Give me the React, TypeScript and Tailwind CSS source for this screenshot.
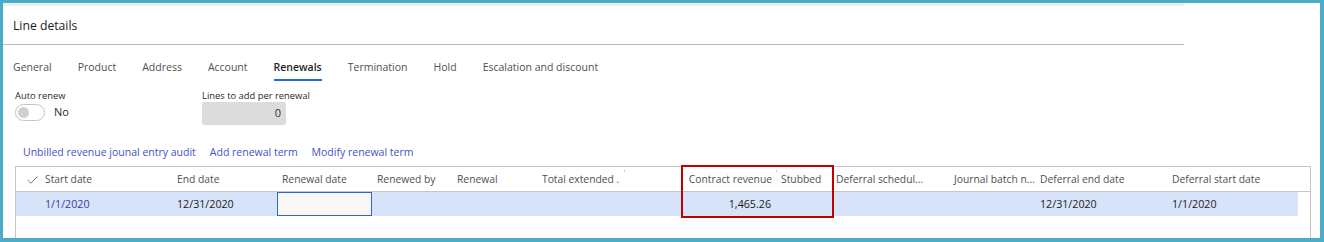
import React from "react";

const font = { fontFamily: '"Open Sans", "Noto Sans", sans-serif' };

type Col = { label: string; w: number; right?: boolean };

const cols: Col[] = [
  { label: "Start date", w: 132 },
  { label: "End date", w: 105 },
  { label: "Renewal date", w: 95 },
  { label: "Renewed by", w: 80 },
  { label: "Renewal", w: 85 },
  { label: "Total extended .", w: 87 },
  { label: "Contract revenue", w: 152, right: true },
  { label: "Stubbed", w: 55 },
  { label: "Deferral schedul...", w: 118 },
  { label: "Journal batch n...", w: 86 },
  { label: "Deferral end date", w: 132 },
  { label: "Deferral start date", w: 131 },
];

const tabs = ["General", "Product", "Address", "Account", "Renewals", "Termination", "Hold", "Escalation and discount"];

export default function App() {
  return (
    <div className="h-[242px] w-[1324px] bg-[#4bacc6] pt-[3px] pl-[3px] pr-[4px] pb-[4px]" style={font}>
      <div className="flex h-[235px] w-[1317px] flex-col overflow-hidden bg-white">
        <div className="h-[3px] w-[1181px] shrink-0 bg-[#ededed]" />
        <div className="flex h-[38px] w-[1181px] shrink-0 items-center pl-[10px] pt-[2px] text-[12.2px] text-[#1b1b1b]">
          Line details
        </div>
        <div className="h-px w-[1181px] shrink-0 bg-[#bcbcbc]" />
        <div className="flex h-[36px] shrink-0 gap-[26px] pl-[10px] text-[10.5px]">
          {tabs.map((t) => (
            <div
              key={t}
              className={
                t === "Renewals"
                  ? "h-[36px] border-b-2 border-[#2266e3] pt-[14px] leading-[16px] font-semibold text-[#1f1f1f]"
                  : "h-[36px] border-b-2 border-transparent pt-[14px] leading-[16px] text-[#505050]"
              }
            >
              {t}
            </div>
          ))}
        </div>
        <div className="flex h-[44px] shrink-0 pl-[12px] pt-[9px] text-[9.4px] text-[#2b2b2b]">
          <div className="flex w-[187px] flex-col">
            <div className="leading-[12px]">Auto renew</div>
            <div className="mt-[2px] flex items-center">
              <div className="flex h-[17px] w-[30px] items-center rounded-full border border-[#c4c4c4] pl-[2px]">
                <div className="h-[11px] w-[11px] rounded-full bg-[#cfcfcf]" />
              </div>
              <span className="ml-[9px] text-[11px] text-[#2b2b2b]">No</span>
            </div>
          </div>
          <div className="flex flex-col">
            <div className="leading-[12px]">Lines to add per renewal</div>
            <div className="flex h-[23px] w-[84px] items-center justify-end rounded-[2px] bg-[#dcdcdc] pr-[5px] text-[11px] text-[#333]">
              0
            </div>
          </div>
        </div>
        <div className="mt-[19px] flex h-[16px] shrink-0 gap-[14px] pl-[20px] text-[10.5px] leading-[16px] text-[#4352c6]">
          <span>Unbilled revenue jounal entry audit</span>
          <span>Add renewal term</span>
          <span>Modify renewal term</span>
        </div>
        <div className="relative ml-[12px] mt-[6px] h-[80px] w-[1296px] shrink-0 border-x border-t border-[#c8c6c4]">
          <div className="flex h-[25px] border-b border-[#c8c6c4] pt-[1px] text-[10.3px] text-[#505050]">
            <div className="flex w-[24px] items-center justify-end pr-[2px]">
              <svg width="11" height="8" viewBox="0 0 11 8" fill="none">
                <path d="M0.5 4 L3.8 7.2 L10.5 0.5" stroke="#777" strokeWidth="1" />
              </svg>
            </div>
            {cols.map((c) => (
              <div
                key={c.label}
                className={
                  c.right
                    ? "flex items-center justify-end pr-[4px] whitespace-nowrap"
                    : "flex items-center pl-[5px] whitespace-nowrap"
                }
                style={{ width: c.w }}
              >
                {c.label}
              </div>
            ))}
          </div>
          <div className="flex h-[24px] w-[1282px] bg-[#d7e3f8] text-[10.7px] text-[#1b1b1b]">
            <div className="w-[24px]" />
            <div className="flex w-[132px] items-center pl-[5px] text-[#3e3a94]">1/1/2020</div>
            <div className="flex w-[105px] items-center pl-[5px]">12/31/2020</div>
            <div className="h-[24px] w-[95px] border border-[#2b66d0] bg-[#f8f8f8]" />
            <div className="w-[80px]" />
            <div className="w-[85px]" />
            <div className="w-[87px]" />
            <div className="flex w-[152px] items-center justify-end pr-[5px]">1,465.26</div>
            <div className="w-[55px]" />
            <div className="w-[118px]" />
            <div className="w-[86px]" />
            <div className="flex w-[132px] items-center pl-[5px]">12/31/2020</div>
            <div className="flex w-[115px] items-center pl-[5px]">1/1/2020</div>
          </div>
          <div className="absolute left-[608px] top-[3px] h-[2px] w-px bg-[#c8c8c8]" />
          <div className="absolute left-[760px] top-[3px] h-[2px] w-px bg-[#c8c8c8]" />
          <div className="absolute left-[665px] top-[-2px] h-[53px] w-[153px] border-2 border-[#c00000]" />
        </div>
      </div>
    </div>
  );
}
